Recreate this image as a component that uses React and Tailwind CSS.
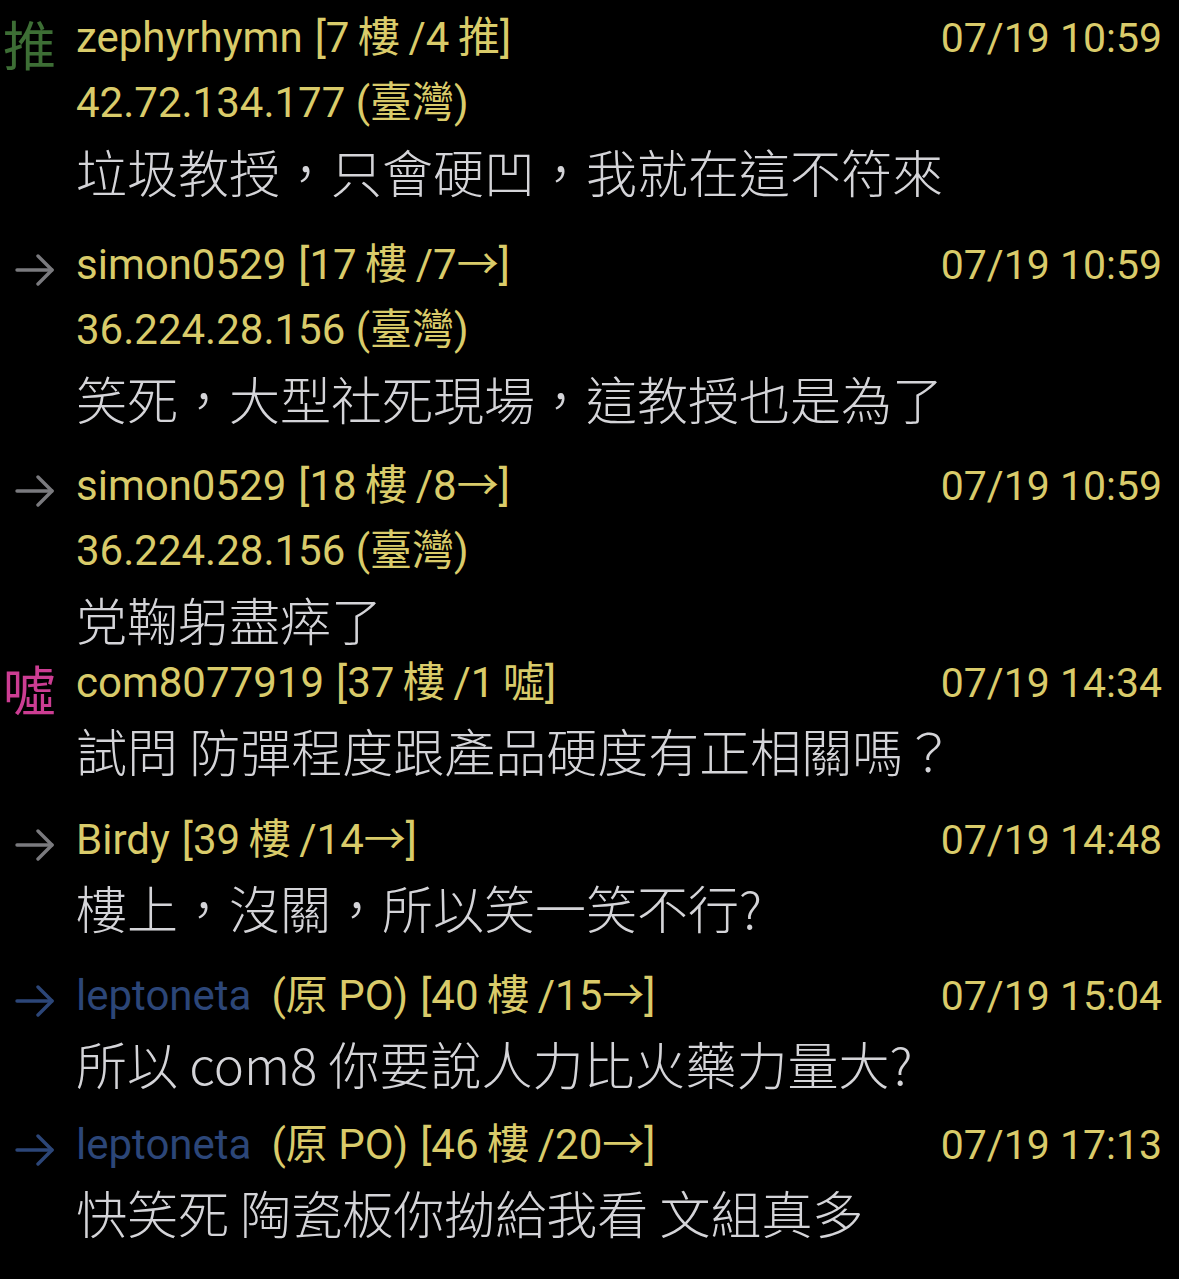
import React from "react";

const Y = "text-[#d9cb6a]";

function Arrow({ color }) {
  return (
    <svg width="40" height="32" viewBox="0 0 40 32" fill="none" stroke={color} strokeWidth="3.4" strokeLinecap="round" strokeLinejoin="round">
      <path d="M2 16 H37" />
      <path d="M23 2 L37 16 L23 30" />
    </svg>
  );
}

const T = "\u2009";

const rows = [
  { tag: "推", name: "zephyrhymn", floor: `[7${T}樓${T}/4${T}推]`, time: "07/19 10:59", ip: `42.72.134.177 (臺灣)`, text: "垃圾教授，只會硬凹，我就在這不符來", mt: "mt-[6px]" },
  { tag: "→", name: "simon0529", floor: `[17${T}樓${T}/7→]`, time: "07/19 10:59", ip: "36.224.28.156 (臺灣)", text: "笑死，大型社死現場，這教授也是為了", mt: "mt-[31px]" },
  { tag: "→", name: "simon0529", floor: `[18${T}樓${T}/8→]`, time: "07/19 10:59", ip: "36.224.28.156 (臺灣)", text: "党鞠躬盡瘁了", mt: "mt-[25px]" },
  { tag: "噓", name: "com8077919", floor: `[37${T}樓${T}/1${T}噓]`, time: "07/19 14:34", text: "試問 防彈程度跟產品硬度有正相關嗎？", mt: "mt-[1px]" },
  { tag: "→", name: "Birdy", floor: `[39${T}樓${T}/14→]`, time: "07/19 14:48", text: "樓上，沒關，所以笑一笑不行?", mt: "mt-[27px]" },
  { tag: "→", op: true, name: "leptoneta", floor: `[40${T}樓${T}/15→]`, time: "07/19 15:04", text: "所以 com8 你要說人力比火藥力量大?", mt: "mt-[26px]" },
  { tag: "→", op: true, name: "leptoneta", floor: `[46${T}樓${T}/20→]`, time: "07/19 17:13", text: "快笑死 陶瓷板你拗給我看 文組真多", mt: "mt-[19px]" },
];

function Tag({ tag, op }) {
  if (tag === "推")
    return <span className="text-[53px] leading-none text-[#3d6e35] ml-[3px]" style={{ fontFamily: '"Noto Sans CJK TC", sans-serif' }}>推</span>;
  if (tag === "噓")
    return <span className="text-[53px] leading-none text-[#cc3d93] ml-[3px]" style={{ fontFamily: '"Noto Sans CJK TC", sans-serif' }}>噓</span>;
  return (
    <span className="ml-[15px]">
      <Arrow color={op ? "#2c4678" : "#7a7a7e"} />
    </span>
  );
}

export default function App() {
  return (
    <div
      className="w-[1179px] h-[1279px] bg-black overflow-hidden"
      style={{ fontFamily: 'Roboto, "Noto Sans CJK TC", sans-serif' }}
    >
      {rows.map((r, i) => (
        <div key={i} className={`flex ${r.mt}`}>
          <div className="w-[76px] shrink-0 h-[64px] flex items-center pt-[10px]">
            <Tag tag={r.tag} op={r.op} />
          </div>
          <div className="flex-1 flex flex-col pr-[17px]">
            <div className="h-[64px] flex items-center justify-between text-[42px] leading-none">
              <div className="flex items-center whitespace-nowrap">
                <span className={r.op ? "text-[#2c4678]" : Y}>{r.name}</span>
                {r.op && <span className={`${Y} ml-[20px]`}>(原 PO)</span>}
                <span className={`${Y} ml-[12px]`}>{r.floor}</span>
              </div>
              <span className={`${Y} text-[41px]`}>{r.time}</span>
            </div>
            {r.ip && (
              <div className={`h-[66px] flex items-center text-[42px] leading-none ${Y}`}>{r.ip}</div>
            )}
            <div
              className="h-[56px] mt-[10px] pb-[6px] flex items-center text-[51px] leading-none font-light text-[#d4d4d8] whitespace-nowrap"
              style={{ fontFamily: '"Noto Sans CJK TC", sans-serif' }}
            >
              {r.text}
            </div>
          </div>
        </div>
      ))}
    </div>
  );
}
